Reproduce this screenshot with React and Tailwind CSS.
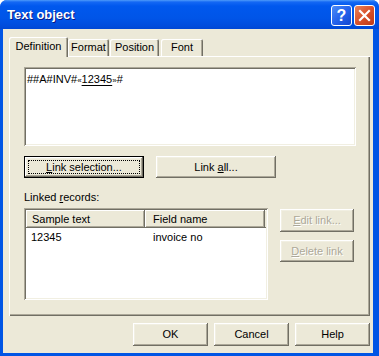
const raised = "bg-[#ECE9D8] shadow-[inset_-1px_-1px_#716F64,inset_1px_1px_#FFFFFF,inset_-2px_-2px_#ACA899,inset_2px_2px_#F1EFE2]";

function Btn({ children, className = "", disabled = false }) {
  return (
    <div
      className={`${raised} flex items-center justify-center leading-[13px] ${
        disabled ? "text-[#ACA899] [text-shadow:1px_1px_0_#FFFFFF]" : "text-black"
      } ${className}`}
    >
      {children}
    </div>
  );
}

function Tab({ children, selected = false, className = "" }) {
  return (
    <div
      className={`flex justify-center ${
        selected
          ? "h-[20px] -mb-px relative z-10 pt-[3px] bg-[#ECE9D8] shadow-[inset_1px_1px_#FFFFFF,inset_-1px_0_#716F64,inset_-2px_0_#ACA899]"
          : "h-[17px] pt-[2px] bg-[#ECE9D8] shadow-[inset_1px_1px_#FFFFFF,inset_-1px_0_#716F64,inset_-2px_0_#ACA899]"
      } rounded-t-[2px] leading-[13px] ${className}`}
    >
      {children}
    </div>
  );
}

export default function App() {
  return (
    <div className="w-[379px] h-[356px] bg-[#0055E5] rounded-t-[7px] flex flex-col overflow-hidden font-['Liberation_Sans',Arial,sans-serif] text-[11px] text-black">
      {/* Title bar */}
      <div className="h-[29px] shrink-0 flex items-center bg-[linear-gradient(to_bottom,#4E9BFA_0px,#1468F4_2px,#0058EE_6px,#0055E8_18px,#004CDC_26px,#0047D4_29px)]">
        <div className="ml-[7px] flex-1 text-white font-bold text-[13px] leading-[16px] [text-shadow:1px_1px_0_#0A1883]">
          Text object
        </div>
        <div className="w-[21px] h-[21px] mt-[2px] rounded-[3px] border border-white bg-[linear-gradient(135deg,#4D8DF7_0%,#2563EC_50%,#1446D0_100%)] flex items-center justify-center text-white font-bold text-[16px] leading-none">
          ?
        </div>
        <div className="w-[21px] h-[21px] mt-[2px] ml-[2px] mr-[4px] rounded-[3px] border border-white bg-[linear-gradient(135deg,#E9845C_0%,#D9512B_50%,#BE3A17_100%)] flex items-center justify-center">
          <svg width="13" height="13" viewBox="0 0 13 13">
            <path d="M2 2 L11 11 M11 2 L2 11" stroke="#FFFFFF" strokeWidth="2.2" strokeLinecap="square" />
          </svg>
        </div>
      </div>

      {/* Body */}
      <div className="flex-1 ml-[3px] mr-[6px] mb-[3px] bg-[#ECE9D8] flex flex-col pl-[6px] pr-[3px] pt-[8px]">
        {/* Tabs */}
        <div className="h-[19px] flex items-end">
          <Tab selected className="w-[59px]">Definition</Tab>
          <Tab className="w-[41px] ml-0">Format</Tab>
          <Tab className="w-[49px] ml-px">Position</Tab>
          <Tab className="w-[42px] ml-[2px]">Font</Tab>
        </div>

        {/* Panel */}
        <div className="h-[260px] shrink-0 shadow-[inset_1px_1px_#FFFFFF,inset_-1px_-1px_#716F64,inset_-2px_-2px_#ACA899] pl-[15px] pt-[11px] flex flex-col">
          {/* Text area */}
          <div className="w-[332px] h-[79px] bg-white shadow-[inset_1px_1px_#ACA899,inset_-1px_-1px_#FFFFFF,inset_2px_2px_#716F64,inset_-2px_-2px_#F1EFE2] pl-[3px] pt-[6px] leading-[13px]">
            ##A#INV#<span className="text-[8px]">«</span>
            <span className="underline underline-offset-[2px]">12345</span>
            <span className="text-[8px]">»</span>#
          </div>

          {/* Link buttons */}
          <div className="flex mt-[10px] gap-[12px]">
            <div className="w-[120px] h-[22px] border border-black">
              <Btn className="w-full h-full">
                <div className="w-[112px] h-[14px] border border-dotted border-black flex items-center justify-center">
                  <span>
                    <span className="underline">L</span>ink selection...
                  </span>
                </div>
              </Btn>
            </div>
            <Btn className="w-[120px] h-[22px]">
              <span>
                Link <span className="underline">a</span>ll...
              </span>
            </Btn>
          </div>

          {/* Label */}
          <div className="mt-[13px] leading-[13px]">
            Linked <span className="underline">r</span>ecords:
          </div>

          {/* List and side buttons */}
          <div className="flex mt-[4px]">
            <div className="w-[244px] h-[92px] bg-white shadow-[inset_1px_1px_#ACA899,inset_-1px_-1px_#FFFFFF,inset_2px_2px_#716F64,inset_-2px_-2px_#F1EFE2] p-[2px] flex flex-col">
              <div className="h-[18px] flex shrink-0">
                <div className="w-[119px] h-full bg-[#ECE9D8] shadow-[inset_-1px_-1px_#716F64,inset_1px_1px_#FFFFFF,inset_-2px_-2px_#ACA899] pl-[6px] flex items-center leading-[13px]">
                  Sample text
                </div>
                <div className="w-[120px] h-full bg-[#ECE9D8] shadow-[inset_-1px_-1px_#716F64,inset_1px_1px_#FFFFFF,inset_-2px_-2px_#ACA899] pl-[8px] flex items-center leading-[13px]">
                  Field name
                </div>
                <div className="flex-1 h-full bg-[#ECE9D8] shadow-[inset_0_-1px_#716F64,inset_0_1px_#FFFFFF]" />
              </div>
              <div className="flex h-[17px] items-center leading-[13px] mt-[1px]">
                <div className="w-[119px] pl-[5px]">12345</div>
                <div className="pl-[8px]">invoice no</div>
              </div>
            </div>
            <div className="ml-[12px] mt-[1px] flex flex-col">
              <Btn disabled className="w-[74px] h-[23px]">
                <span>
                  <span className="underline">E</span>dit link...
                </span>
              </Btn>
              <Btn disabled className="w-[74px] h-[22px] mt-[8px]">
                <span>
                  <span className="underline">D</span>elete link
                </span>
              </Btn>
            </div>
          </div>
        </div>

        {/* Bottom buttons */}
        <div className="flex justify-end gap-[6px] mt-[7px]">
          <Btn className="w-[75px] h-[23px]">OK</Btn>
          <Btn className="w-[75px] h-[23px]">Cancel</Btn>
          <Btn className="w-[75px] h-[23px]">Help</Btn>
        </div>
      </div>
    </div>
  );
}
